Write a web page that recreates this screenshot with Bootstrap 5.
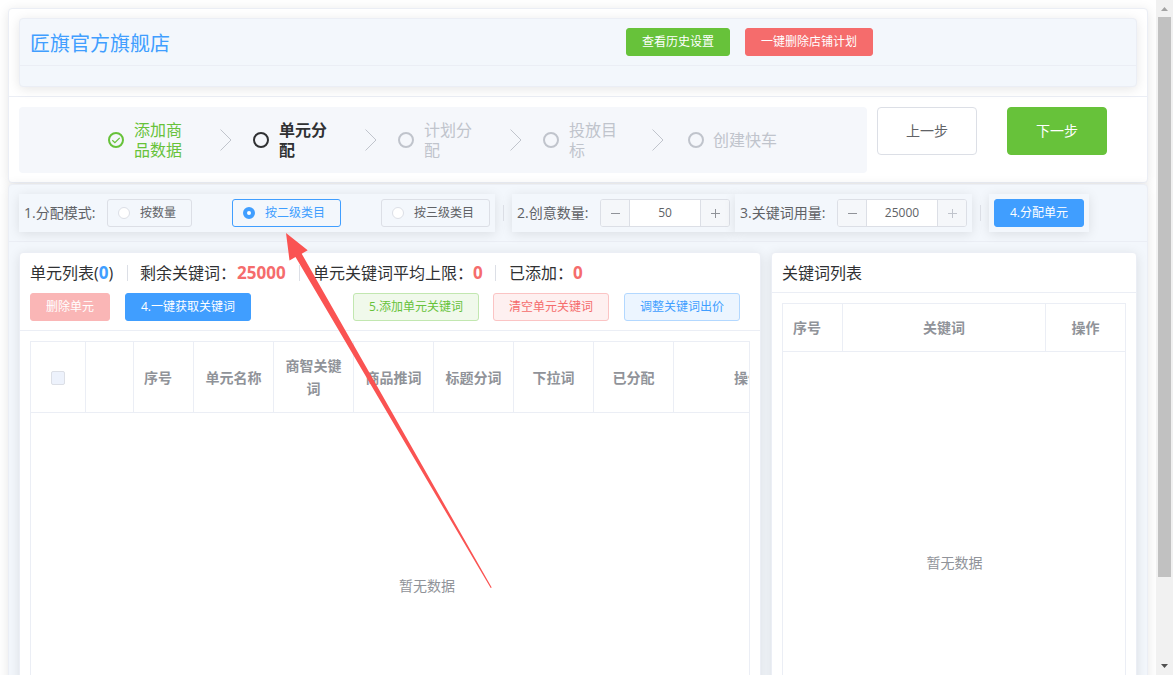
<!DOCTYPE html>
<html lang="zh-CN">
<head>
<meta charset="utf-8">
<meta name="viewport" content="width=device-width, initial-scale=1">
<title>单元分配</title>
<link href="https://cdn.jsdelivr.net/npm/bootstrap@5.3.0/dist/css/bootstrap.min.css" rel="stylesheet">
<style>
:root{--blue:#409eff;--green:#67c23a;--red:#f56c6c;--line:#ebeef5;--line2:#dcdfe6;--tint:#f3f7fc}
body{font-family:"Open Sans","Noto Sans CJK SC",sans-serif;font-size:14px;color:#606266;line-height:1.5;height:675px;overflow:hidden;background:#fff}
.page-main{width:1156px;padding:8px 8px 0;height:675px;overflow:hidden}
.panel{border:1px solid var(--line);border-radius:4px;box-shadow:0 2px 12px rgba(0,0,0,.1);background:#fff;color:#303133}
.panel-tint{background:var(--tint)}
.rule-b{border-bottom:1px solid var(--line)}
.top-panel{height:176px}
.top-head{height:88px;padding:9px 10px}
.shop{height:69px}
.shop-head{height:47px;padding:0 10px}
.shop-name{font-size:20px;color:var(--blue);width:596px;line-height:28px;padding-top:3px}
.btn-el{--bs-btn-font-size:12px;--bs-btn-padding-x:0;--bs-btn-padding-y:0;--bs-btn-border-radius:3px;height:28px;line-height:26px;white-space:nowrap;flex:none}
.btn-big{--bs-btn-font-size:14px;--bs-btn-border-radius:4px;width:100px;height:48px}
.b-green{--bs-btn-color:#fff;--bs-btn-bg:var(--green);--bs-btn-border-color:var(--green)}
.b-red{--bs-btn-color:#fff;--bs-btn-bg:var(--red);--bs-btn-border-color:var(--red)}
.b-blue{--bs-btn-color:#fff;--bs-btn-bg:var(--blue);--bs-btn-border-color:var(--blue)}
.b-plain{--bs-btn-color:#606266;--bs-btn-bg:#fff;--bs-btn-border-color:var(--line2)}
.b-off{--bs-btn-color:#fff;--bs-btn-bg:#fab6b6;--bs-btn-border-color:#fab6b6}
.b-green-l{--bs-btn-color:var(--green);--bs-btn-bg:#f0f9eb;--bs-btn-border-color:#c2e7b0}
.b-red-l{--bs-btn-color:var(--red);--bs-btn-bg:#fef0f0;--bs-btn-border-color:#fbc4c4}
.b-blue-l{--bs-btn-color:var(--blue);--bs-btn-bg:#ecf5ff;--bs-btn-border-color:#b3d8ff}
.w80{width:80px}.w90{width:90px}.w104{width:104px}.w116{width:116px}.w126{width:126px}.w128{width:128px}
.steps-row{padding:10px}
.steps{width:848px;height:66px;background:#f5f7fb;border-radius:4px;padding-left:89px}
.step-item{width:145px;color:#c0c4cc;font-size:16px;line-height:20px;flex:none}
.step-text{width:50px;margin-left:10px;flex:none}
.step-item svg{flex:none;display:block}
.step-item .chev{margin-left:36px}
.done{color:var(--green)}
.now{color:#303133;font-weight:700}
.work-panel{height:520px;background:var(--tint)}
.tool-head{height:57px;padding:9px 10px 0}
.tool-group{height:38px;padding:5px;background:var(--tint);box-shadow:0 2px 12px rgba(0,0,0,.1);flex:none;color:#606266}
.tool-label{white-space:nowrap;flex:none;padding-bottom:2px}
.radio-box{height:28px;border:1px solid var(--line2);border-radius:3px;padding-left:10px;font-size:12px;flex:none;margin-right:40px;white-space:nowrap}
.radio-dot{width:12px;height:12px;border:1px solid var(--line2);border-radius:50%;background:#fff;margin-right:10px}
.radio-box.on{border-color:var(--blue);color:var(--blue)}
.radio-box.on .radio-dot{border:4px solid var(--blue)}
.vline{width:1px;height:16px;background:var(--line2);flex:none}
.stepper{width:130px;height:28px;border:1px solid var(--line2);border-radius:3px;overflow:hidden;flex:none;background:#fff;font-size:12px}
.stepper-btn{width:28px;background:#f5f7fa;color:#606266}
.stepper-value{border:solid var(--line2);border-width:0 1px;flex:1;text-align:center;line-height:26px}
.lists{padding:10px}
.unit-panel{width:742px;height:470px;flex:none}
.word-panel{width:366px;height:470px;flex:none}
.unit-head{height:78px;padding:8px 10px 0}
.unit-info{height:24px;font-size:16px;white-space:nowrap;margin-bottom:8px}
.unit-info>span,.unit-info b{flex:none}
.num{color:var(--red);font-size:17px;line-height:24px}
.grid-box{border:1px solid var(--line);overflow:hidden;margin:10px;height:600px;color:#909399}
.grid-table{table-layout:fixed;border-collapse:separate;border-spacing:0}
.grid-table th{border-right:1px solid var(--line);border-bottom:1px solid var(--line);font-size:14px;line-height:23px;text-align:center;vertical-align:middle;padding:0 9px;font-weight:700}
.unit-table{width:792px}.unit-table th{height:71px}
.word-table{width:343px}.word-table th{height:48px}
.grid-table th.idx{padding:0 11px 0 0}
.check{display:block;width:14px;height:14px;border:1px solid var(--line2);border-radius:2px;background:#edf2fc;margin:1px auto 0}
.word-head{height:40px;padding:8px 10px;font-size:16px;line-height:24px}
.scroll-rail{width:17px;height:675px;background:#f1f1f1}
.scroll-thumb{width:13px;height:560px;background:#c1c1c1}
.pointer{position:absolute;left:0;top:0;pointer-events:none}
</style>
</head>
<body>
<div class="d-flex">
<main class="page-main">
  <section class="panel top-panel" style="height:175px">
    <div class="top-head rule-b">
      <div class="panel panel-tint shop">
        <div class="shop-head rule-b d-flex align-items-center">
          <span class="shop-name">匠旗官方旗舰店</span>
          <button class="btn btn-el b-green w104">查看历史设置</button>
          <button class="btn btn-el b-red w128" style="margin-left:15px">一键删除店铺计划</button>
        </div>
      </div>
    </div>
    <div class="steps-row d-flex">
      <div class="steps d-flex align-items-center">
        <div class="step-item done d-flex align-items-center">
          <svg width="16" height="16" fill="none" stroke="currentColor"><circle cx="8" cy="8" r="7" stroke-width="2"/><path d="M4.3 8.2l2.6 2.5 4.8-4.900" stroke-width="1.2"/></svg>
          <span class="step-text">添加商品数据</span>
          <svg class="chev" width="12" height="22" fill="none" stroke="#c0c4cc"><path d="M.5.5L11 11 .5 21.5"/></svg>
        </div>
        <div class="step-item now d-flex align-items-center">
          <svg width="16" height="16" fill="none" stroke="currentColor"><circle cx="8" cy="8" r="7" stroke-width="2"/></svg>
          <span class="step-text">单元分配</span>
          <svg class="chev" width="12" height="22" fill="none" stroke="#c0c4cc"><path d="M.5.5L11 11 .5 21.5"/></svg>
        </div>
        <div class="step-item d-flex align-items-center">
          <svg width="16" height="16" fill="none" stroke="currentColor"><circle cx="8" cy="8" r="7" stroke-width="2"/></svg>
          <span class="step-text">计划分配</span>
          <svg class="chev" width="12" height="22" fill="none" stroke="#c0c4cc"><path d="M.5.5L11 11 .5 21.5"/></svg>
        </div>
        <div class="step-item d-flex align-items-center">
          <svg width="16" height="16" fill="none" stroke="currentColor"><circle cx="8" cy="8" r="7" stroke-width="2"/></svg>
          <span class="step-text">投放目标</span>
          <svg class="chev ms-auto me-4" width="12" height="22" fill="none" stroke="#c0c4cc"><path d="M.5.5L11 11 .5 21.5"/></svg>
        </div>
        <div class="step-item d-flex align-items-center">
          <svg width="16" height="16" fill="none" stroke="currentColor"><circle cx="8" cy="8" r="7" stroke-width="2"/></svg>
          <span class="step-text text-nowrap" style="margin-left:9px">创建快车</span>
        </div>
      </div>
      <button class="btn btn-el btn-big b-plain" style="margin-left:10px">上一步</button>
      <button class="btn btn-el btn-big b-green" style="margin-left:30px">下一步</button>
    </div>
  </section>

  <section class="panel work-panel" style="margin-top:1px">
    <div class="tool-head rule-b d-flex">
      <div class="tool-group d-flex align-items-center" style="width:476px">
        <span class="tool-label" style="width:83px">1.分配模式:</span>
        <label class="radio-box d-flex align-items-center" style="width:85px"><span class="radio-dot"></span>按数量</label>
        <label class="radio-box on d-flex align-items-center" style="width:109px"><span class="radio-dot"></span>按二级类目</label>
        <label class="radio-box d-flex align-items-center me-0" style="width:109px"><span class="radio-dot"></span>按三级类目</label>
      </div>
      <div class="vline" style="margin:11px 8px 0"></div>
      <div class="tool-group d-flex align-items-center" style="width:223px">
        <span class="tool-label" style="width:83px">2.创意数量:</span>
        <div class="stepper d-flex">
          <span class="stepper-btn d-flex align-items-center justify-content-center"><svg width="9" height="9" stroke="#909399"><path d="M0 4.5h9"/></svg></span>
          <span class="stepper-value">50</span>
          <span class="stepper-btn d-flex align-items-center justify-content-center"><svg width="9" height="9" stroke="#909399"><path d="M0 4.5h9M4.500 0v9"/></svg></span>
        </div>
      </div>
      <div class="tool-group d-flex align-items-center" style="width:237px">
        <span class="tool-label" style="width:97px">3.关键词用量:</span>
        <div class="stepper d-flex">
          <span class="stepper-btn d-flex align-items-center justify-content-center"><svg width="9" height="9" stroke="#909399"><path d="M0 4.5h9"/></svg></span>
          <span class="stepper-value">25000</span>
          <span class="stepper-btn d-flex align-items-center justify-content-center"><svg width="9" height="9" stroke="#c0c4cc"><path d="M0 4.5h9M4.500 0v9"/></svg></span>
        </div>
      </div>
      <div class="vline" style="margin:11px 8px 0"></div>
      <div class="tool-group"><button class="btn btn-el b-blue w90 d-block">4.分配单元</button></div>
    </div>

    <div class="lists d-flex">
      <div class="panel unit-panel">
        <div class="unit-head rule-b">
          <div class="unit-info d-flex align-items-center">
            <span style="width:97px">单元列表(<b style="color:var(--blue);font-size:17px;line-height:1">0</b>)</span><i class="vline"></i>
            <span style="width:109px;padding-left:12px">剩余关键词：</span><b class="num" style="width:62px">25000</b><i class="vline"></i>
            <span style="width:173px;padding-left:13px">单元关键词平均上限：</span><b class="num" style="width:22px">0</b><i class="vline"></i>
            <span style="width:77px;padding-left:13px">已添加：</span><b class="num">0</b>
          </div>
          <div class="d-flex">
            <button class="btn btn-el b-off w80">删除单元</button>
            <button class="btn btn-el b-blue w126" style="margin-left:15px">4.一键获取关键词</button>
            <button class="btn btn-el b-green-l w126 ms-auto">5.添加单元关键词</button>
            <button class="btn btn-el b-red-l w116" style="margin-left:14px">清空单元关键词</button>
            <button class="btn btn-el b-blue-l w116" style="margin:0 10px 0 15px">调整关键词出价</button>
          </div>
        </div>
        <div class="grid-box">
          <table class="grid-table unit-table">
            <colgroup><col style="width:55px"><col style="width:48px"><col style="width:60px"><col span="6" style="width:80px"><col style="width:149px"></colgroup>
            <thead><tr><th><span class="check"></span></th><th></th><th class="idx">序号</th><th>单元名称</th><th>商智关键词</th><th>商品推词</th><th>标题分词</th><th>下拉词</th><th>已分配</th><th>操作</th></tr></thead>
            <tbody><tr><td colspan="10" class="text-center" style="height:344px">暂无数据</td></tr></tbody>
          </table>
        </div>
      </div>
      <div class="panel word-panel" style="margin-left:10px">
        <div class="word-head rule-b">关键词列表</div>
        <div class="grid-box">
          <table class="grid-table word-table">
            <colgroup><col style="width:60px"><col style="width:203px"><col style="width:80px"></colgroup>
            <thead><tr><th class="idx">序号</th><th>关键词</th><th>操作</th></tr></thead>
            <tbody><tr><td colspan="3" class="text-center" style="height:420px">暂无数据</td></tr></tbody>
          </table>
        </div>
      </div>
    </div>
  </section>
</main>
<aside class="scroll-rail d-flex flex-column align-items-center">
  <svg width="17" height="17" fill="#a3a3a3"><path d="M5 11l3.500-4L12 11z"/></svg>
  <div class="scroll-thumb"></div>
  <svg class="mt-auto" width="17" height="17" fill="#505050"><path d="M5 6l3.500 4L12 6z"/></svg>
</aside>
</div>
<svg class="pointer" width="1173" height="675" fill="#fa5352"><path d="M286 233l21.700 17.300-6 3.400L491.700 587.500l-1 .6L295.500 257l-6 3.400z"/></svg>
<script src="https://cdn.jsdelivr.net/npm/bootstrap@5.3.0/dist/js/bootstrap.bundle.min.js"></script>
</body>
</html>
